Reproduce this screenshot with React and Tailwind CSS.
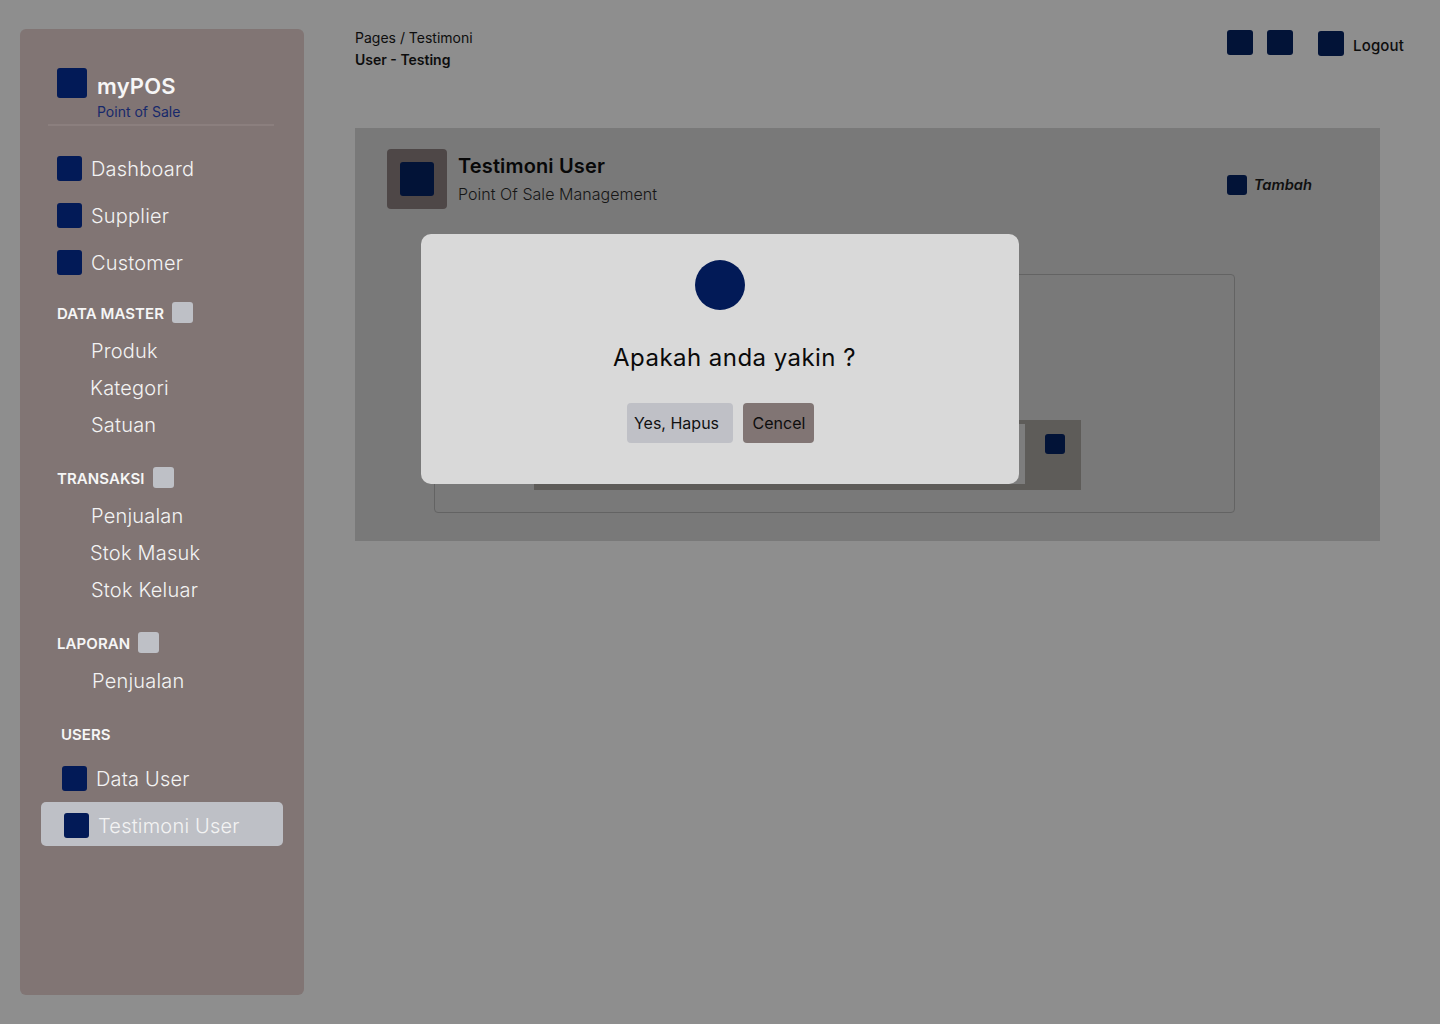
const navy = 'bg-[#021a57]';
const dark = 'bg-[#021337]';

function Square({ className }) {
    return <div className={`shrink-0 rounded-[3px] ${className}`} />;
}

function NavItem({ label, className = 'pl-[37px] mb-[22px]' }) {
    return (
        <div className={`flex items-center gap-[9px] h-[25px] ${className}`}>
            <Square className={`w-[25px] h-[25px] ${navy}`} />
            <span className="text-[20px] font-light leading-none tracking-[0.2px] text-[#f3f3f3]">{label}</span>
        </div>
    );
}

function Section({ label, className }) {
    return (
        <div className={`flex items-center gap-[8px] pl-[37px] h-[21px] ${className}`}>
            <span className="mt-[2px] text-[15px] font-semibold leading-none tracking-[0.08px] text-[#f6f6f6]">{label}</span>
            <Square className="w-[21px] h-[21px] bg-[#bec0c6]" />
        </div>
    );
}

function SubItem({ label, pl = 'pl-[71px]' }) {
    return <div className={`h-[37px] flex items-center ${pl} text-[20px] font-light leading-none tracking-[0.2px] text-[#f3f3f3]`}>{label}</div>;
}

function Sidebar() {
    return (
        <aside className="w-[284px] h-[966px] mt-[29px] ml-[20px] shrink-0 rounded-[6px] bg-[#817574] pt-[39px]">
            <div className="flex pl-[37px] h-[30px]">
                <Square className={`w-[30px] h-[30px] ${navy}`} />
                <span className="ml-[10px] mt-[6px] text-[22px] font-semibold leading-[24px] tracking-[0.2px] text-[#f6f6f6]">myPOS</span>
            </div>
            <div className="pl-[77px] mt-[5px] h-[18px] text-[14px] leading-[18px] text-[#17296b]">Point of Sale</div>
            <div className="ml-[28px] mt-[3px] w-[226px] h-[2px] bg-[#8b7f7e]" />

            <div className="mt-[30px]">
                <NavItem label="Dashboard" />
                <NavItem label="Supplier" />
                <NavItem label="Customer" className="pl-[37px]" />
            </div>

            <Section label="DATA MASTER" className="mt-[27px]" />
            <div className="mt-[9px]">
                <SubItem label="Produk" />
                <SubItem label="Kategori" pl="pl-[70px]" />
                <SubItem label="Satuan" />
            </div>

            <Section label="TRANSAKSI" className="mt-[24px]" />
            <div className="mt-[9px]">
                <SubItem label="Penjualan" />
                <SubItem label="Stok Masuk" pl="pl-[70px]" />
                <SubItem label="Stok Keluar" />
            </div>

            <Section label="LAPORAN" className="mt-[24px]" />
            <div className="mt-[9px]">
                <SubItem label="Penjualan" pl="pl-[72px]" />
            </div>

            <div className="mt-[25px] pl-[41px] h-[21px] flex items-center text-[15px] font-semibold leading-none text-[#f6f6f6]">USERS</div>
            <NavItem label="Data User" className="pl-[42px] mt-[21px]" />
            <div className="mt-[11px] ml-[21px] w-[242px] h-[44px] rounded-[5px] bg-[#bec0c6] flex items-center gap-[9px] pl-[23px] pt-[3px]">
                <Square className={`w-[25px] h-[25px] ${navy}`} />
                <span className="text-[20px] font-light leading-none tracking-[0.2px] text-[#f3f3f3]">Testimoni User</span>
            </div>
        </aside>
    );
}

function Topbar() {
    return (
        <div className="flex justify-between h-[128px]">
            <div className="pt-[29px] text-[14px] leading-[18px] text-[#0d0d0d]">
                <div>Pages / Testimoni</div>
                <div className="mt-[4px] font-semibold">User - Testing</div>
            </div>
            <div className="flex pt-[30px] pr-[36px]">
                <Square className={`w-[26px] h-[25px] ${dark}`} />
                <Square className={`w-[26px] h-[25px] ml-[14px] ${dark}`} />
                <Square className={`w-[26px] h-[25px] ml-[25px] mt-[1px] ${dark}`} />
                <span className="ml-[9px] mt-[7px] text-[15px] font-medium leading-[18px] tracking-[0.15px] text-[#0d0d0d]">Logout</span>
            </div>
        </div>
    );
}

function Card() {
    return (
        <div className="w-[1025px] h-[413px] bg-[#797979] pt-[21px] px-[32px]">
            <div className="flex">
                <div className="w-[60px] h-[60px] rounded-[4px] bg-[#4e4747] flex items-center justify-center">
                    <Square className={`w-[34px] h-[34px] ${dark}`} />
                </div>
                <div className="ml-[11px] flex-1">
                    <div className="mt-[4px] text-[20px] font-semibold leading-[26px] tracking-[0.15px] text-[#080808]">Testimoni User</div>
                    <div className="mt-[4px] text-[16px] font-light leading-[22px] tracking-[0.04px] text-[#161616]">Point Of Sale Management</div>
                </div>
                <div className="flex items-start pt-[26px] pr-[36px]">
                    <Square className={`w-[20px] h-[20px] ${dark}`} />
                    <span className="ml-[7px] text-[14.7px] font-semibold italic leading-[20px] text-[#101010]">Tambah</span>
                </div>
            </div>
            <div className="ml-[47px] mt-[65px] w-[801px] h-[239px] rounded-[4px] border border-[#636363] pt-[145px] pl-[99px]">
                <div className="w-[547px] h-[70px] bg-[#5e5c59] flex">
                    <div className="w-[491px] h-[60px] mt-[4px] bg-[#7d7d7d]" />
                    <Square className={`w-[20px] h-[20px] ml-[20px] mt-[14px] ${dark}`} />
                </div>
            </div>
        </div>
    );
}

function ConfirmDialog() {
    return (
        <div className="absolute left-[421px] top-[234px] w-[598px] h-[250px] rounded-[10px] bg-[#d9d9d9] flex flex-col items-center pt-[26px]">
            <div className={`w-[50px] h-[50px] rounded-full ${navy}`} />
            <div className="mt-[32px] ml-[29px] text-[24px] leading-[32px] text-[#0a0a0a] tracking-[0.46px]">Apakah anda yakin ?</div>
            <div className="mt-[29px] ml-[206px] flex gap-[10px] self-start">
                <button className="w-[106px] h-[40px] rounded-[4px] bg-[#bfc0c6] text-[16px] leading-none text-[#111111] pr-[7px]">Yes, Hapus</button>
                <button className="w-[71px] h-[40px] rounded-[4px] bg-[#817574] text-[16px] leading-none text-[#0d0d0d] pl-[1px]">Cencel</button>
            </div>
        </div>
    );
}

export default function App() {
    return (
        <div className="relative flex w-[1440px] h-[1024px] overflow-hidden bg-[#8e8e8e] font-['Inter',sans-serif]">
            <Sidebar />
            <main className="ml-[51px] flex-1">
                <Topbar />
                <Card />
            </main>
            <ConfirmDialog />
        </div>
    );
}
